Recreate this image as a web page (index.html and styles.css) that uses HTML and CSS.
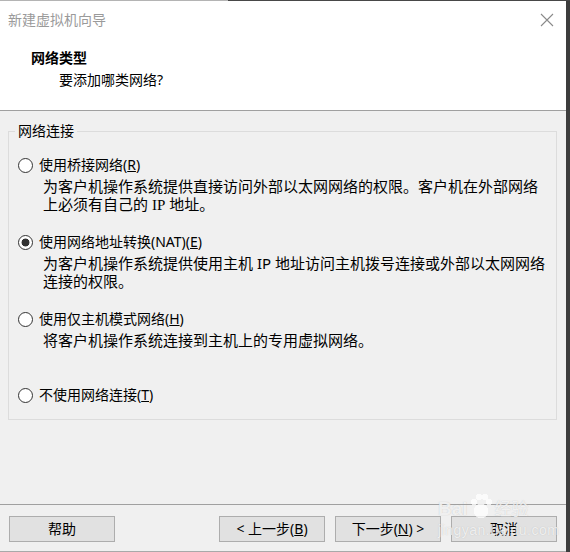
FILE: index.html
```html
<!DOCTYPE html>
<html lang="zh-CN">
<head>
<meta charset="utf-8">
<title>新建虚拟机向导</title>
<link rel="stylesheet" href="styles.css">
</head>
<body>
<div class="top-edge"></div>
<div class="dialog">
  <header class="header">
    <div class="titlebar">
      <span class="title">新建虚拟机向导</span>
      <svg class="close" width="14" height="14" viewBox="0 0 14 14"><path d="M1 1L13 13M13 1L1 13" stroke="#8a8a8a" stroke-width="1.1" fill="none"/></svg>
    </div>
    <div class="page-title">网络类型</div>
    <div class="page-sub">要添加哪类网络?</div>
  </header>

  <main class="content">
    <fieldset class="group">
      <legend class="group-legend">网络连接</legend>
      <div class="options">
        <div class="option">
          <label class="radio-row"><input type="radio" name="net"><span>使用桥接网络(<u>R</u>)</span></label>
          <p class="desc">为客户机操作系统提供直接访问外部以太网网络的权限。客户机在外部网络<br>上必须有自己的 <span class="serif">IP</span> 地址。</p>
        </div>
        <div class="option">
          <label class="radio-row"><input type="radio" name="net" checked><span>使用网络地址转换(NAT)(<u>E</u>)</span></label>
          <p class="desc">为客户机操作系统提供使用主机 IP 地址访问主机拨号连接或外部以太网网络<br>连接的权限。</p>
        </div>
        <div class="option opt-hostonly">
          <label class="radio-row"><input type="radio" name="net"><span>使用仅主机模式网络(<u>H</u>)</span></label>
          <p class="desc">将客户机操作系统连接到主机上的专用虚拟网络。</p>
        </div>
        <div class="option opt-none">
          <label class="radio-row"><input type="radio" name="net"><span>不使用网络连接(<u>T</u>)</span></label>
        </div>
      </div>
    </fieldset>
  </main>

  <footer class="footer">
    <button class="btn btn-help">帮助</button>
    <button class="btn">&lt; 上一步(<u>B</u>)</button>
    <button class="btn">下一步(<u>N</u>) &gt;</button>
    <button class="btn">取消</button>
  </footer>

  <div class="watermark">
    <div class="wm-top"><span class="wm-bai">Bai</span><span class="wm-paw"></span><span class="wm-jy">经验</span></div>
    <div class="wm-url">jingyan.baidu.com</div>
  </div>
</div>
</body>
</html>
```

FILE: styles.css
```css
html, body {
  margin: 0;
  padding: 0;
}
body {
  width: 570px;
  height: 552px;
  overflow: hidden;
  background: #3d3d3d;
  font-family: "Noto Sans", "Noto Sans CJK SC", sans-serif;
  font-size: 14px;
  color: #000;
}
.top-edge {
  height: 1px;
  background: linear-gradient(to right, #b4b4b4 228px, #474747 228px);
}
.dialog {
  position: relative;
  width: 566px;
  height: 551px;
  box-sizing: border-box;
  background: #f0f0f0;
  border-bottom: 1px solid #a9a9a9;
  display: flex;
  flex-direction: column;
}
.header {
  height: 110px;
  box-sizing: border-box;
  background: #fff;
  border-bottom: 1px solid #a0a0a0;
}
.titlebar {
  height: 38px;
  display: flex;
  align-items: center;
  justify-content: space-between;
  padding: 0 12px 0 8px;
}
.title {
  color: #9a9a9a;
  font-size: 14px;
  line-height: 20px;
}
.close {
  display: block;
}
.page-title {
  margin: 9px 0 0 31px;
  font-weight: bold;
  line-height: 20px;
}
.page-sub {
  margin: 2px 0 0 59px;
  line-height: 20px;
}
.content {
  padding: 0 9px 0 8px;
}
.group {
  margin: 11px 0 0;
  padding: 0;
  border: 1px solid #dcdcdc;
}
.group-legend {
  margin-left: 6px;
  padding: 0 3px;
  line-height: 18px;
}
.options {
  padding: 15px 0 14px 9px;
}
.option + .option {
  margin-top: 18px;
}
.option.opt-hostonly {
  margin-top: 19px;
}
.option.opt-none {
  margin-top: 36px;
}
.radio-row {
  display: flex;
  align-items: center;
  gap: 6px;
  line-height: 20px;
  height: 20px;
}
.radio-row input {
  appearance: none;
  -webkit-appearance: none;
  width: 15px;
  height: 15px;
  margin: 0;
  border: 1px solid #333;
  border-radius: 50%;
  background: #fff;
  box-sizing: border-box;
}
.radio-row input:checked {
  background: radial-gradient(circle, #333 0, #333 3.6px, #fff 4.3px);
}
.desc {
  margin: 2px 0 0 25px;
  font-size: 15px;
  line-height: 18px;
  white-space: nowrap;
}
.serif {
  font-family: "Liberation Serif", serif;
}
.footer {
  margin-top: auto;
  border-top: 1px solid #a0a0a0;
  padding: 11px 9px 9px;
  display: flex;
  gap: 10px;
}
.btn {
  width: 106px;
  height: 26px;
  box-sizing: border-box;
  border: 1px solid #adadad;
  background: #e1e1e1;
  font-family: inherit;
  font-size: 14px;
  color: #000;
  padding: 0;
  line-height: 22px;
}
.btn-help {
  margin-right: auto;
}
.watermark {
  position: absolute;
  left: 438px;
  top: 486px;
  color: rgba(255, 255, 255, 0.75);
  text-shadow: 0 0 1px rgba(160, 160, 160, 0.6);
  pointer-events: none;
}
.wm-top {
  display: flex;
  align-items: flex-end;
  height: 32px;
}
.wm-bai {
  font-family: "Liberation Sans", sans-serif;
  font-weight: bold;
  font-size: 19px;
  line-height: 20px;
}
.wm-paw {
  width: 22px;
  height: 26px;
  margin: 0 3px 0 2px;
  background:
    radial-gradient(circle at 11px 18px, rgba(255,255,255,0.75) 7px, transparent 7.5px),
    radial-gradient(circle at 4px 9px, rgba(255,255,255,0.75) 3px, transparent 3.5px),
    radial-gradient(circle at 9px 4px, rgba(255,255,255,0.75) 3px, transparent 3.5px),
    radial-gradient(circle at 15px 4px, rgba(255,255,255,0.75) 3px, transparent 3.5px),
    radial-gradient(circle at 19px 9px, rgba(255,255,255,0.75) 3px, transparent 3.5px);
}
.wm-jy {
  font-size: 17px;
  line-height: 20px;
}
.wm-url {
  margin-top: 3px;
  font-family: "Liberation Sans", sans-serif;
  font-size: 14px;
  letter-spacing: 0.5px;
  line-height: 16px;
}
```
